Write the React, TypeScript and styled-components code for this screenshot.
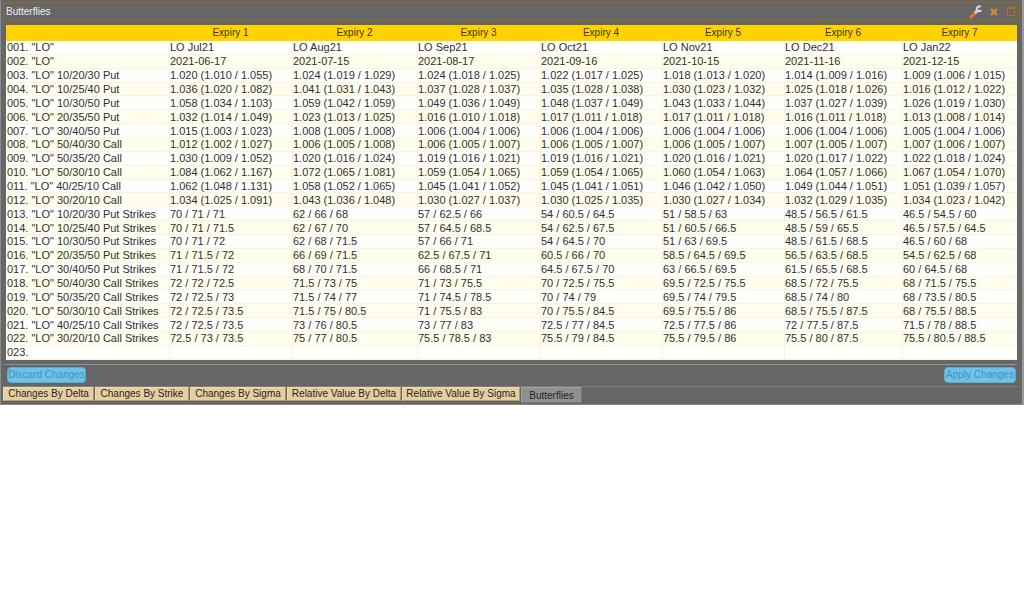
import React from "react";
import styled, { createGlobalStyle } from "styled-components";

const GlobalStyle = createGlobalStyle`
  body { margin: 0; background: #fff; }
  * { box-sizing: border-box; }
  button { font: inherit; cursor: pointer; }
`;

const Panel = styled.main`
  padding: 2px 2px 1px 2px;
  background: #666;
  border-left: 1px solid #8c8c8c;
  border-right: 2px solid #999;
  border-bottom: 1px solid #858585;
  font-family: "Liberation Sans", Arial, sans-serif;
  font-size: 11px;
  color: #303030;
`;

const TitleBar = styled.header`
  display: flex;
  align-items: center;
  justify-content: space-between;
  height: 19px;
  padding: 0 2px;
  border: 1px solid #8f6d1c;
  border-radius: 2px;
`;

const Title = styled.h1`
  margin: 0;
  font-size: 10px;
  font-weight: 400;
  color: #f0f0f0;
`;

const Tools = styled.div`
  display: flex;
  align-items: center;
  gap: 6px;
`;

const ToolButton = styled.button`
  display: flex;
  padding: 0;
  border: 0;
  background: none;
`;

const Body = styled.section`
  margin: 0 3px 0 1px;
  padding: 4px 0 4px 2px;
  border-bottom: 1px solid #929292;
`;

const Grid = styled.table`
  width: 100%;
  height: 335px;
  table-layout: fixed;
  border-collapse: separate;
  border-spacing: 0;
  background: #fffffa;
`;

const HeadCell = styled.th`
  height: 16px;
  padding: 0;
  background: #ffd200;
  color: #40380c;
  font-size: 10px;
  font-weight: 400;
  line-height: 12px;
  text-align: center;
`;

const Row = styled.tr`
  &:nth-child(even) { background: #fffeec; }
`;

const Label = styled.th`
  padding: 0 1px;
  border-bottom: 1px solid #f6f5e8;
  font-weight: 400;
  line-height: 12px;
  text-align: left;
  white-space: nowrap;
`;

const Cell = styled.td`
  padding: 0;
  border-bottom: 1px solid #f6f5e8;
  border-left: 1px solid #f4f3e6;
  line-height: 12px;
  white-space: nowrap;
`;

const Actions = styled.div`
  display: flex;
  justify-content: space-between;
  padding: 2px 4px 3px 4px;
`;

const ActionButton = styled.button<{ $width: number }>`
  width: ${(p) => p.$width}px;
  height: 16px;
  padding: 0;
  border: 1px solid #58acd0;
  border-radius: 4px;
  background: #6cc4ea;
  color: #4393b4;
  font-size: 10px;
  line-height: 12px;
  white-space: nowrap;
`;

const Tabs = styled.nav`
  display: flex;
  align-items: flex-start;
  gap: 1px;
  border-top: 1px solid #7c7c7c;
`;

const Tab = styled.button<{ $width: number; $active?: boolean }>`
  width: ${(p) => p.$width}px;
  height: ${(p) => (p.$active ? 16 : 14)}px;
  padding: ${(p) => (p.$active ? "2px 0 0" : "0")};
  border: 1px solid ${(p) => (p.$active ? "#a2a2a2" : "#f0dcae")};
  border-right-color: ${(p) => (p.$active ? "#7a7a7a" : "#b09a6c")};
  border-bottom-color: ${(p) => (p.$active ? "#7a7a7a" : "#b09a6c")};
  background: ${(p) => (p.$active ? "#909090" : "#e6cf9f")};
  color: #262626;
  font-size: 10px;
  line-height: 12px;
  white-space: nowrap;
`;

const columnWidths = [163, 123, 125, 123, 122, 122, 118, 115];

const rows: [string, string[]][] = [
  ['001. "LO"', ["LO Jul21", "LO Aug21", "LO Sep21", "LO Oct21", "LO Nov21", "LO Dec21", "LO Jan22"]],
  ['002. "LO"', ["2021-06-17", "2021-07-15", "2021-08-17", "2021-09-16", "2021-10-15", "2021-11-16", "2021-12-15"]],
  ['003. "LO" 10/20/30 Put', ["1.020 (1.010 / 1.055)", "1.024 (1.019 / 1.029)", "1.024 (1.018 / 1.025)", "1.022 (1.017 / 1.025)", "1.018 (1.013 / 1.020)", "1.014 (1.009 / 1.016)", "1.009 (1.006 / 1.015)"]],
  ['004. "LO" 10/25/40 Put', ["1.036 (1.020 / 1.082)", "1.041 (1.031 / 1.043)", "1.037 (1.028 / 1.037)", "1.035 (1.028 / 1.038)", "1.030 (1.023 / 1.032)", "1.025 (1.018 / 1.026)", "1.016 (1.012 / 1.022)"]],
  ['005. "LO" 10/30/50 Put', ["1.058 (1.034 / 1.103)", "1.059 (1.042 / 1.059)", "1.049 (1.036 / 1.049)", "1.048 (1.037 / 1.049)", "1.043 (1.033 / 1.044)", "1.037 (1.027 / 1.039)", "1.026 (1.019 / 1.030)"]],
  ['006. "LO" 20/35/50 Put', ["1.032 (1.014 / 1.049)", "1.023 (1.013 / 1.025)", "1.016 (1.010 / 1.018)", "1.017 (1.011 / 1.018)", "1.017 (1.011 / 1.018)", "1.016 (1.011 / 1.018)", "1.013 (1.008 / 1.014)"]],
  ['007. "LO" 30/40/50 Put', ["1.015 (1.003 / 1.023)", "1.008 (1.005 / 1.008)", "1.006 (1.004 / 1.006)", "1.006 (1.004 / 1.006)", "1.006 (1.004 / 1.006)", "1.006 (1.004 / 1.006)", "1.005 (1.004 / 1.006)"]],
  ['008. "LO" 50/40/30 Call', ["1.012 (1.002 / 1.027)", "1.006 (1.005 / 1.008)", "1.006 (1.005 / 1.007)", "1.006 (1.005 / 1.007)", "1.006 (1.005 / 1.007)", "1.007 (1.005 / 1.007)", "1.007 (1.006 / 1.007)"]],
  ['009. "LO" 50/35/20 Call', ["1.030 (1.009 / 1.052)", "1.020 (1.016 / 1.024)", "1.019 (1.016 / 1.021)", "1.019 (1.016 / 1.021)", "1.020 (1.016 / 1.021)", "1.020 (1.017 / 1.022)", "1.022 (1.018 / 1.024)"]],
  ['010. "LO" 50/30/10 Call', ["1.084 (1.062 / 1.167)", "1.072 (1.065 / 1.081)", "1.059 (1.054 / 1.065)", "1.059 (1.054 / 1.065)", "1.060 (1.054 / 1.063)", "1.064 (1.057 / 1.066)", "1.067 (1.054 / 1.070)"]],
  ['011. "LO" 40/25/10 Call', ["1.062 (1.048 / 1.131)", "1.058 (1.052 / 1.065)", "1.045 (1.041 / 1.052)", "1.045 (1.041 / 1.051)", "1.046 (1.042 / 1.050)", "1.049 (1.044 / 1.051)", "1.051 (1.039 / 1.057)"]],
  ['012. "LO" 30/20/10 Call', ["1.034 (1.025 / 1.091)", "1.043 (1.036 / 1.048)", "1.030 (1.027 / 1.037)", "1.030 (1.025 / 1.035)", "1.030 (1.027 / 1.034)", "1.032 (1.029 / 1.035)", "1.034 (1.023 / 1.042)"]],
  ['013. "LO" 10/20/30 Put Strikes', ["70 / 71 / 71", "62 / 66 / 68", "57 / 62.5 / 66", "54 / 60.5 / 64.5", "51 / 58.5 / 63", "48.5 / 56.5 / 61.5", "46.5 / 54.5 / 60"]],
  ['014. "LO" 10/25/40 Put Strikes', ["70 / 71 / 71.5", "62 / 67 / 70", "57 / 64.5 / 68.5", "54 / 62.5 / 67.5", "51 / 60.5 / 66.5", "48.5 / 59 / 65.5", "46.5 / 57.5 / 64.5"]],
  ['015. "LO" 10/30/50 Put Strikes', ["70 / 71 / 72", "62 / 68 / 71.5", "57 / 66 / 71", "54 / 64.5 / 70", "51 / 63 / 69.5", "48.5 / 61.5 / 68.5", "46.5 / 60 / 68"]],
  ['016. "LO" 20/35/50 Put Strikes', ["71 / 71.5 / 72", "66 / 69 / 71.5", "62.5 / 67.5 / 71", "60.5 / 66 / 70", "58.5 / 64.5 / 69.5", "56.5 / 63.5 / 68.5", "54.5 / 62.5 / 68"]],
  ['017. "LO" 30/40/50 Put Strikes', ["71 / 71.5 / 72", "68 / 70 / 71.5", "66 / 68.5 / 71", "64.5 / 67.5 / 70", "63 / 66.5 / 69.5", "61.5 / 65.5 / 68.5", "60 / 64.5 / 68"]],
  ['018. "LO" 50/40/30 Call Strikes', ["72 / 72 / 72.5", "71.5 / 73 / 75", "71 / 73 / 75.5", "70 / 72.5 / 75.5", "69.5 / 72.5 / 75.5", "68.5 / 72 / 75.5", "68 / 71.5 / 75.5"]],
  ['019. "LO" 50/35/20 Call Strikes', ["72 / 72.5 / 73", "71.5 / 74 / 77", "71 / 74.5 / 78.5", "70 / 74 / 79", "69.5 / 74 / 79.5", "68.5 / 74 / 80", "68 / 73.5 / 80.5"]],
  ['020. "LO" 50/30/10 Call Strikes', ["72 / 72.5 / 73.5", "71.5 / 75 / 80.5", "71 / 75.5 / 83", "70 / 75.5 / 84.5", "69.5 / 75.5 / 86", "68.5 / 75.5 / 87.5", "68 / 75.5 / 88.5"]],
  ['021. "LO" 40/25/10 Call Strikes', ["72 / 72.5 / 73.5", "73 / 76 / 80.5", "73 / 77 / 83", "72.5 / 77 / 84.5", "72.5 / 77.5 / 86", "72 / 77.5 / 87.5", "71.5 / 78 / 88.5"]],
  ['022. "LO" 30/20/10 Call Strikes', ["72.5 / 73 / 73.5", "75 / 77 / 80.5", "75.5 / 78.5 / 83", "75.5 / 79 / 84.5", "75.5 / 79.5 / 86", "75.5 / 80 / 87.5", "75.5 / 80.5 / 88.5"]],
  ["023.", ["", "", "", "", "", "", ""]],
];

const tabs = [
  { name: "Changes By Delta", width: 91 },
  { name: "Changes By Strike", width: 94 },
  { name: "Changes By Sigma", width: 96 },
  { name: "Relative Value By Delta", width: 114 },
  { name: "Relative Value By Sigma", width: 118 },
  { name: "Butterflies", width: 61, active: true },
];

export default function App() {
  return (
    <>
      <GlobalStyle />
      <Panel>
        <TitleBar>
          <Title>Butterflies</Title>
          <Tools>
            <ToolButton aria-label="Settings">
              <svg width="14" height="14" viewBox="0 0 14 14" fill="none">
                <path d="M2 12 6.200 8" stroke="#e8752a" strokeWidth="3" strokeLinecap="round" />
                <path d="M6 8 8.600 5.400" stroke="#d4d4d4" strokeWidth="3" />
                <path d="M12 1.800C9.400 .8 7.400 2.200 7.800 4.400C8.400 6.400 10.600 6.600 12.400 5.400" stroke="#d4d4d4" strokeWidth="2.200" />
              </svg>
            </ToolButton>
            <ToolButton aria-label="Close">
              <svg width="10" height="10" viewBox="0 0 10 10" fill="none">
                <path d="M2 2 8 8M8 2 2 8" stroke="#e8842a" strokeWidth="2.200" />
              </svg>
            </ToolButton>
            <ToolButton aria-label="Maximize">
              <svg width="12" height="12" viewBox="0 0 12 12" fill="none">
                <path d="M2.500 2.500h7v7h-7z" stroke="#d0651f" />
                <path d="M2 2h8" stroke="#d0651f" strokeWidth="2" />
              </svg>
            </ToolButton>
          </Tools>
        </TitleBar>
        <Body>
          <Grid>
            <colgroup>
              {columnWidths.map((width, i) => (
                <col key={i} width={width} />
              ))}
            </colgroup>
            <thead>
              <tr>
                <HeadCell />
                {[1, 2, 3, 4, 5, 6, 7].map((n) => (
                  <HeadCell key={n} scope="col">Expiry {n}</HeadCell>
                ))}
              </tr>
            </thead>
            <tbody>
              {rows.map(([label, values]) => (
                <Row key={label}>
                  <Label scope="row">{label}</Label>
                  {values.map((value, i) => (
                    <Cell key={i}>{value}</Cell>
                  ))}
                </Row>
              ))}
            </tbody>
          </Grid>
        </Body>
        <Actions>
          <ActionButton $width={79}>Discard Changes</ActionButton>
          <ActionButton $width={72}>Apply Changes</ActionButton>
        </Actions>
        <Tabs>
          {tabs.map((tab) => (
            <Tab key={tab.name} $width={tab.width} $active={tab.active}>
              {tab.name}
            </Tab>
          ))}
        </Tabs>
      </Panel>
    </>
  );
}
